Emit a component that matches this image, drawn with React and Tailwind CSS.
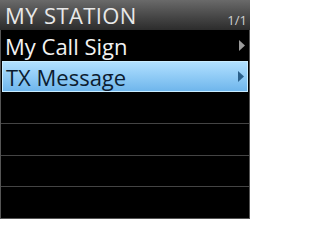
import React from 'react';

const ROWS = [
  { label: 'My Call Sign', arrow: true },
  { label: 'TX Message', arrow: true, selected: true },
  { label: '' },
  { label: '' },
  { label: '' },
  { label: '' },
];

function Arrow({ selected }) {
  return (
    <svg width="6" height="11" viewBox="0 0 6 11" className="shrink-0">
      <path d="M0 0 L6 5.5 L0 11 Z" fill={selected ? '#2a5f8a' : '#9a9a9a'} />
    </svg>
  );
}

export default function App() {
  return (
    <div
      className="w-[250px] h-[219px] bg-black flex flex-col overflow-hidden"
      style={{ fontFamily: '"Open Sans", "Noto Sans", sans-serif' }}
    >
      {/* title bar */}
      <div className="h-[30px] shrink-0 flex items-end justify-between pl-[5px] pr-[3px] bg-gradient-to-b from-[#6a6a6a] to-[#2c2c2c]">
        <span className="text-[22px] leading-[29px] font-medium text-[#e8e8e8] tracking-[0.4px]">MY STATION</span>
        <span className="text-[13px] leading-none font-medium text-[#d0d0d0] mb-[3px]">1/1</span>
      </div>

      <div className="flex-1 flex flex-col border-x border-b border-[#555]">
        {ROWS.map((row, i) => (
          <div
            key={i}
            className={
              row.selected
                ? 'h-[31px] flex items-center justify-between pl-[3px] pr-[3px] mx-[1px] border border-[#c8ecff] bg-gradient-to-b from-[#b0e0ff] to-[#6fb6ec]'
                : i < 2
                  ? 'h-[31px] flex items-center justify-between pl-[4px] pr-[4px]'
                  : i < 5
                    ? 'flex-1 border-b border-[#444]'
                    : 'flex-1'
            }
          >
            {row.label && (
              <span
                className={
                  'text-[22px] leading-none font-medium ' +
                  (row.selected ? 'text-[#0c1c30]' : 'text-[#f2f2f2]')
                }
              >
                {row.label}
              </span>
            )}
            {row.arrow && <Arrow selected={row.selected} />}
          </div>
        ))}
      </div>
    </div>
  );
}
